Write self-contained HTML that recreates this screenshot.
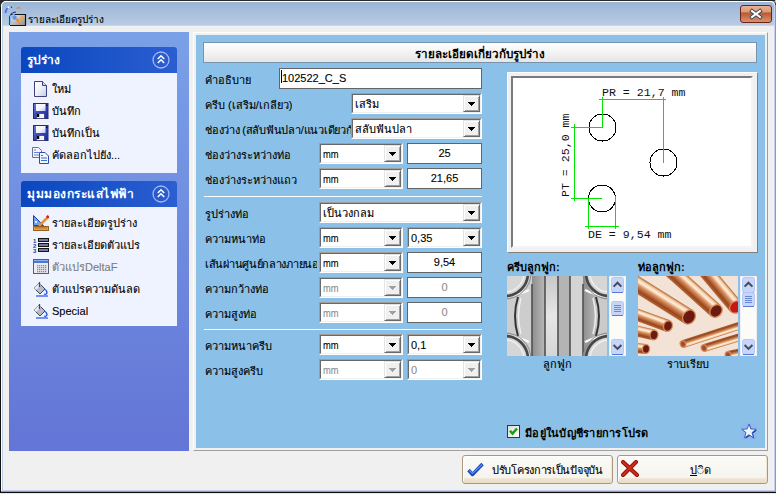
<!DOCTYPE html>
<html><head><meta charset="utf-8">
<style>
*{margin:0;padding:0;box-sizing:border-box}
html,body{width:776px;height:494px;overflow:hidden;background:#f0f0f0}
body{position:relative;font-family:"Liberation Sans",sans-serif;font-size:11px;color:#000;-webkit-text-stroke:0.1px currentColor}
.gh,#head,.bd{-webkit-text-stroke:0}
.a{position:absolute}
/* window frame */
#frame{left:0;top:0;width:776px;height:494px;background:#f0f0f0}
#title{left:2px;top:2px;width:772px;height:24px;background:linear-gradient(#9bb5d5,#b9cde5)}
.ttl{left:28px;top:13px;font-size:10px;line-height:13px;color:#000}
#close{left:740px;top:5px;width:32px;height:18px;border:1px solid #6b2418;border-radius:3px;
 background:linear-gradient(#eab090 0%,#dc9a78 35%,#b85a34 45%,#c46a44 60%,#dc9068 100%)}
/* left panel */
#lp{left:9px;top:32px;width:180px;height:419px;background:linear-gradient(#7aa1e8,#6375d6)}
.gh{left:21px;width:156px;height:26px;border-radius:3px 3px 0 0;background:linear-gradient(90deg,#0a47bf,#2b5ed1);color:#fff;font-weight:bold;font-size:12px}
.gh span{position:absolute;left:6px;top:6px;line-height:14px}
.gb{left:21px;width:156px;background:#eff3ff}
.item{position:absolute;left:31px;height:22px;line-height:22px;font-size:11px}
.item .ic{position:absolute;left:2px;top:3px;width:16px;height:16px}
.item .tx{position:absolute;left:21px;top:0;white-space:nowrap}
.chev{position:absolute;left:132px;top:4px;width:18px;height:18px;border-radius:50%;border:1px solid #9aaef0;background:#2458cc}
/* main panel */
#mpo{left:193px;top:32px;width:575px;height:419px;border:1px solid;border-color:#fff #a0a0a0 #a0a0a0 #fff}
#mp{left:196px;top:35px;width:569px;height:413px;background:#8bc0e8}
#head{left:203px;top:42px;width:554px;height:21px;border:1px solid #7a93ad;background:linear-gradient(#ffffff,#e6e6e6);text-align:center;font-weight:bold;font-size:11.6px;line-height:21px}
.lbl{position:absolute;left:205px;white-space:nowrap;overflow:hidden;height:22px;line-height:25px;font-size:11px}
.txt{position:absolute;height:21px;background:#fff;border:1px solid #646464;font-size:11px;line-height:18px;padding:0 2px;white-space:nowrap;overflow:hidden}
.cmb{position:absolute;height:21px;background:#fff;border:1px solid;border-color:#a39d98 #fff #fff #a39d98;font-size:11px;white-space:nowrap}
.cmb .in{position:absolute;left:0;top:0;right:0;bottom:0;border:1px solid;border-color:#696969 #f0f0f0 #f0f0f0 #696969;overflow:hidden;line-height:18px;padding-left:2px}
.btn{position:absolute;right:0;top:0;width:17px;height:17px;background:#f0f0f0;border:1px solid;border-color:#e3e3e3 #696969 #696969 #e3e3e3;box-shadow:inset 1px 1px 0 #fff,inset -1px -1px 0 #a0a0a0}
.btn:after{content:"";position:absolute;left:4px;top:6px;width:7px;height:4px;
 background:linear-gradient(#000,#000) 0 0/7px 1px no-repeat,linear-gradient(#000,#000) 1px 1px/5px 1px no-repeat,linear-gradient(#000,#000) 2px 2px/3px 1px no-repeat,linear-gradient(#000,#000) 3px 3px/1px 1px no-repeat}
.dis{color:#8c8c8c}
.dis .btn:after{background:linear-gradient(#a0a0a0,#a0a0a0) 0 0/7px 1px no-repeat,linear-gradient(#a0a0a0,#a0a0a0) 1px 1px/5px 1px no-repeat,linear-gradient(#a0a0a0,#a0a0a0) 2px 2px/3px 1px no-repeat,linear-gradient(#a0a0a0,#a0a0a0) 3px 3px/1px 1px no-repeat}
.c{text-align:center}
.mm{display:inline-block;transform:scaleX(.85);transform-origin:0 0}
.sep{position:absolute;left:204px;width:278px;height:1px;background:#fff}
</style></head><body>
<div id="frame" class="a"></div>
<!-- borders -->
<div class="a" style="left:0;top:0;width:776px;height:1px;background:#2a2a2a"></div>
<div class="a" style="left:0;top:0;width:1px;height:494px;background:#111"></div>
<div class="a" style="left:1px;top:1px;width:774px;height:1px;background:#fff"></div>
<div class="a" style="left:1px;top:1px;width:1px;height:490px;background:#fff"></div>
<div class="a" style="left:2px;top:2px;width:1px;height:488px;background:#b9cde6"></div>
<div id="title" class="a"></div>
<svg class="a" style="left:0;top:0" width="8" height="8" viewBox="0 0 8 8"><path d="M0 0 H7 V0.8 Q1.2 0.8 0.8 7 H0 Z" fill="#2a2a2a"/><path d="M7 1.3 Q1.6 1.3 1.3 7" stroke="#fff" stroke-width="0.9" fill="none"/></svg>
<div class="a" style="left:2px;top:25px;width:772px;height:1px;background:#c6d8ec"></div>
<div class="a" style="left:774px;top:2px;width:1px;height:489px;background:#c8d0f0"></div>
<div class="a" style="left:775px;top:4px;width:1px;height:490px;background:#22c4ee"></div>
<svg class="a" style="left:766px;top:0" width="10" height="8" viewBox="0 0 10 8"><rect x="9" y="0" width="1" height="4" fill="#8ae0f8"/><path d="M0 0.5 H5 Q9.5 0.5 9.5 5" stroke="#222" stroke-width="1" fill="none"/><path d="M0 1.5 H5 Q8.5 1.5 8.5 5" stroke="#fff" stroke-width="1" fill="none"/></svg>
<div class="a" style="left:2px;top:490px;width:773px;height:1px;background:#c8d0f0"></div>
<div class="a" style="left:1px;top:491px;width:775px;height:1px;background:#22c4ee"></div>
<div class="a" style="left:0;top:492px;width:776px;height:1px;background:#101010"></div>
<div class="a" style="left:0;top:493px;width:776px;height:1px;background:#e8e8e8"></div>

<svg class="a" style="left:2px;top:2px" width="26" height="26" viewBox="0 0 26 26">
<defs><linearGradient id="tbx" x1="0" y1="0" x2="1" y2="1"><stop offset="0" stop-color="#f0f0f0"/><stop offset="0.6" stop-color="#b8b8b8"/><stop offset="1" stop-color="#909090"/></linearGradient></defs>
<path d="M3.5 11 Q4 6.5 7.5 4.8" stroke="#3a78f0" stroke-width="1.8" fill="none"/>
<circle cx="6.5" cy="5.3" r="1.1" fill="#fff"/>
<circle cx="9.5" cy="5.2" r="0.7" fill="#203060"/>
<path d="M14 6.5 Q16.5 3.5 19 6.5 Z" fill="#f07a28"/>
<rect x="7" y="12" width="16.5" height="11" fill="url(#tbx)"/>
<path d="M9 12.5 H23.5 V23.5 H8" stroke="#141414" stroke-width="1.2" fill="none"/>
<path d="M7.5 23 V15 Q8.5 10.5 14 10" stroke="#2a3a80" stroke-width="1.1" fill="none"/>
<path d="M8.5 21 V16 Q9.5 12.5 13 12" stroke="#70b8f8" stroke-width="1.2" fill="none"/>
<circle cx="12.5" cy="15.5" r="2.2" fill="#4a90f0" opacity="0.9"/>
<path d="M14.5 17 L17 20 L21.5 14.5" stroke="#f08a30" stroke-width="2.2" fill="none"/>
<path d="M17 20 L21.5 14.5" stroke="#fcd080" stroke-width="0.8" fill="none"/>
</svg>
<div class="a ttl">รายละเอียดรูปร่าง</div>
<div id="close" class="a"></div>
<svg class="a" style="left:740px;top:5px" width="32" height="18" viewBox="0 0 32 18">
<path d="M12 6 L20 12 M20 6 L12 12" stroke="#3b4656" stroke-width="3.8" stroke-linecap="square"/>
<path d="M12 6 L20 12 M20 6 L12 12" stroke="#fff" stroke-width="2" stroke-linecap="square"/>
</svg>

<!-- left panel -->
<div id="lp" class="a"></div>
<div class="a gh" style="top:47px"><span>รูปร่าง</span><svg style="position:absolute;left:130px;top:3px" width="20" height="20" viewBox="0 0 20 20"><circle cx="10" cy="10" r="8" fill="none" stroke="#a6b6f2" stroke-width="1.3"/><path d="M6.8 9 L10 5.8 L13.2 9 M6.8 13 L10 9.8 L13.2 13" stroke="#fff" stroke-width="1.6" fill="none"/></svg></div>
<div class="a gb" style="top:73px;height:100px">
  <div class="item" style="left:10px;top:5px"><div class="ic"><svg width="16" height="16" viewBox="0 0 16 16"><defs><linearGradient id="gd" x1="0" y1="0" x2="1" y2="1"><stop offset="0" stop-color="#fff"/><stop offset="0.5" stop-color="#f0f0f4"/><stop offset="1" stop-color="#b8d0ea"/></linearGradient></defs><path d="M1.5 0.5 H9.5 L13.5 4.5 V15.5 H1.5 Z" fill="url(#gd)" stroke="#3c4282"/><path d="M9.5 0.5 V4.5 H13.5" fill="#c8d8f0" stroke="#3c4282"/></svg></div><div class="tx">ใหม่</div></div>
  <div class="item" style="left:10px;top:27px"><div class="ic"><svg width="16" height="16" viewBox="0 0 16 16"><defs><linearGradient id="flb" x1="0" y1="0" x2="1" y2="1"><stop offset="0" stop-color="#6a80e0"/><stop offset="0.5" stop-color="#3848b8"/><stop offset="1" stop-color="#202a90"/></linearGradient><linearGradient id="fll" x1="0" y1="0" x2="1" y2="1"><stop offset="0" stop-color="#fff"/><stop offset="0.6" stop-color="#f0f0f8"/><stop offset="1" stop-color="#b0c4f0"/></linearGradient></defs><rect x="0.5" y="0.5" width="14.5" height="15" fill="url(#flb)" stroke="#262c7c"/><rect x="3" y="1" width="9.5" height="7" fill="url(#fll)"/><rect x="3.5" y="10.5" width="8" height="5" fill="#f4f4f8" stroke="#1c2060" stroke-width="0.6"/><rect x="4" y="11" width="2.2" height="3" fill="#000"/><rect x="13" y="1.5" width="1.3" height="1.5" fill="#000"/></svg></div><div class="tx">บันทึก</div></div>
  <div class="item" style="left:10px;top:49px"><div class="ic"><svg width="16" height="16" viewBox="0 0 16 16"><defs><linearGradient id="flb" x1="0" y1="0" x2="1" y2="1"><stop offset="0" stop-color="#6a80e0"/><stop offset="0.5" stop-color="#3848b8"/><stop offset="1" stop-color="#202a90"/></linearGradient><linearGradient id="fll" x1="0" y1="0" x2="1" y2="1"><stop offset="0" stop-color="#fff"/><stop offset="0.6" stop-color="#f0f0f8"/><stop offset="1" stop-color="#b0c4f0"/></linearGradient></defs><rect x="0.5" y="0.5" width="14.5" height="15" fill="url(#flb)" stroke="#262c7c"/><rect x="3" y="1" width="9.5" height="7" fill="url(#fll)"/><rect x="3.5" y="10.5" width="8" height="5" fill="#f4f4f8" stroke="#1c2060" stroke-width="0.6"/><rect x="4" y="11" width="2.2" height="3" fill="#000"/><rect x="13" y="1.5" width="1.3" height="1.5" fill="#000"/></svg></div><div class="tx">บันทึกเป็น</div></div>
  <div class="item" style="left:10px;top:71px"><div class="ic"><svg width="18" height="18" viewBox="0 0 18 18" style="position:absolute;left:-1px;top:0"><path d="M0.5 0.5 H6.5 L9.5 3.5 V10.5 H0.5 Z" fill="#f4f4f8" stroke="#70708a"/><path d="M2 3 H4 M2 5.5 H7 M2 8 H7" stroke="#5a86d8" stroke-width="1"/><path d="M7.5 5.5 H13 L16.5 9 V16.5 H7.5 Z" fill="#f4f6fc" stroke="#3848a8"/><path d="M9 8.5 H11 M9 11 H15 M9 13.5 H15" stroke="#3a70d0" stroke-width="1.2"/></svg></div><div class="tx">คัดลอกไปยัง...</div></div>
</div>
<div class="a gh" style="top:181px"><span style="letter-spacing:0.5px">มุมมองกระแสไฟฟ้า</span><svg style="position:absolute;left:130px;top:3px" width="20" height="20" viewBox="0 0 20 20"><circle cx="10" cy="10" r="8" fill="none" stroke="#a6b6f2" stroke-width="1.3"/><path d="M6.8 9 L10 5.8 L13.2 9 M6.8 13 L10 9.8 L13.2 13" stroke="#fff" stroke-width="1.6" fill="none"/></svg></div>
<div class="a gb" style="top:207px;height:119px">
  <div class="item" style="left:10px;top:5px"><div class="ic"><svg width="16" height="16" viewBox="0 0 16 16"><path d="M0.5 0.5 L10.5 10.5 H0.5 Z" fill="#6aa0f0" stroke="#2040b0"/><circle cx="3" cy="7" r="1" fill="#fff"/><path d="M6 11 L15 2" stroke="#e8903a" stroke-width="2.6"/><path d="M13.8 0.8 L15.6 2.6" stroke="#d02818" stroke-width="2.4"/><rect x="0.5" y="11.5" width="15" height="4" fill="#e0a050" stroke="#9a6020"/><path d="M3 12 V13.5 M5 12 V13.5 M7 12 V13.5 M9 12 V13.5 M11 12 V13.5 M13 12 V13.5" stroke="#7a4a10" stroke-width="0.7"/></svg></div><div class="tx">รายละเอียดรูปร่าง</div></div>
  <div class="item" style="left:10px;top:27px"><div class="ic"><svg width="16" height="16" viewBox="0 0 16 16"><text x="0" y="5.5" font-size="6" font-weight="bold" fill="#1c3a90" font-family="Liberation Sans">1</text><text x="0" y="10.5" font-size="6" font-weight="bold" fill="#1c3a90" font-family="Liberation Sans">2</text><text x="0" y="15.5" font-size="6" font-weight="bold" fill="#1c3a90" font-family="Liberation Sans">3</text><rect x="5.5" y="1.5" width="10" height="3" fill="#7878a0" stroke="#141414"/><rect x="5.5" y="6.5" width="10" height="3" fill="#7878a0" stroke="#141414"/><rect x="5.5" y="11.5" width="10" height="3" fill="#7878a0" stroke="#141414"/></svg></div><div class="tx">รายละเอียดตัวแปร</div></div>
  <div class="item" style="left:10px;top:49px;color:#7c7c7c"><div class="ic"><svg width="16" height="16" viewBox="0 0 16 16"><rect x="0.5" y="0.5" width="15" height="14" fill="#ececf0" stroke="#5a5a70"/><rect x="1" y="1" width="14" height="3" fill="#4a7ad8"/><rect x="1" y="1" width="14" height="1" fill="#8ab0f0"/><rect x="4" y="6" width="1.3" height="1.3" fill="#8a8a96"/><rect x="6" y="6" width="1.3" height="1.3" fill="#8a8a96"/><rect x="8" y="6" width="1.3" height="1.3" fill="#8a8a96"/><rect x="10" y="6" width="1.3" height="1.3" fill="#8a8a96"/><rect x="12" y="6" width="1.3" height="1.3" fill="#8a8a96"/><rect x="4" y="8" width="1.3" height="1.3" fill="#8a8a96"/><rect x="6" y="8" width="1.3" height="1.3" fill="#8a8a96"/><rect x="8" y="8" width="1.3" height="1.3" fill="#8a8a96"/><rect x="10" y="8" width="1.3" height="1.3" fill="#8a8a96"/><rect x="12" y="8" width="1.3" height="1.3" fill="#8a8a96"/><rect x="4" y="10" width="1.3" height="1.3" fill="#8a8a96"/><rect x="6" y="10" width="1.3" height="1.3" fill="#8a8a96"/><rect x="8" y="10" width="1.3" height="1.3" fill="#8a8a96"/><rect x="10" y="10" width="1.3" height="1.3" fill="#8a8a96"/><rect x="12" y="10" width="1.3" height="1.3" fill="#8a8a96"/><rect x="4" y="12" width="1.3" height="1.3" fill="#8a8a96"/><rect x="6" y="12" width="1.3" height="1.3" fill="#8a8a96"/><rect x="8" y="12" width="1.3" height="1.3" fill="#8a8a96"/><rect x="10" y="12" width="1.3" height="1.3" fill="#8a8a96"/><rect x="12" y="12" width="1.3" height="1.3" fill="#8a8a96"/></svg></div><div class="tx">ตัวแปรDeltaF</div></div>
  <div class="item" style="left:10px;top:71px"><div class="ic"><svg width="16" height="16" viewBox="0 0 16 16"><path d="M1 7 L6 2 L12 8 L7 13 Z" fill="#b8bcc8" stroke="#404858"/><path d="M1 7 L6 2 L8 4 L3 9 Z" fill="#e8ecf4"/><path d="M6.5 1 V6" stroke="#404858" stroke-width="1.3"/><path d="M11 8 Q14 9 14 12 Q13 14 11 13" stroke="#2050e0" stroke-width="1.3" fill="none"/><path d="M3 15 H15" stroke="#2050e0" stroke-width="1.2"/></svg></div><div class="tx">ตัวแปรความดันลด</div></div>
  <div class="item" style="left:10px;top:93px"><div class="ic"><svg width="16" height="16" viewBox="0 0 16 16"><path d="M1 7 L6 2 L12 8 L7 13 Z" fill="#b8bcc8" stroke="#404858"/><path d="M1 7 L6 2 L8 4 L3 9 Z" fill="#e8ecf4"/><path d="M6.5 1 V6" stroke="#404858" stroke-width="1.3"/><path d="M11 8 Q14 9 14 12 Q13 14 11 13" stroke="#2050e0" stroke-width="1.3" fill="none"/><path d="M3 15 H15" stroke="#2050e0" stroke-width="1.2"/></svg></div><div class="tx">Special</div></div>
</div>

<!-- main panel -->
<div id="mpo" class="a"></div>
<div id="mp" class="a"></div>
<div id="head" class="a">รายละเอียดเกี่ยวกับรูปร่าง</div>

<div class="lbl" style="top:68px">คำอธิบาย</div>
<div class="txt" style="left:279px;top:68px;width:203px">102522_C_S</div>
<div class="a" style="left:281px;top:70px;width:1px;height:13px;background:#000"></div>

<div class="lbl" style="top:93px">ครีบ (เสริม/เกลียว)</div>
<div class="cmb" style="left:351px;top:93px;width:131px"><div class="in">เสริม<div class="btn"></div></div></div>
<div class="lbl" style="top:118px;width:146px;letter-spacing:-0.25px">ช่องว่าง (สลับฟันปลา/แนวเดียวกัน)</div>
<div class="cmb" style="left:351px;top:118px;width:131px"><div class="in">สลับฟันปลา<div class="btn"></div></div></div>

<div class="lbl" style="top:143px">ช่องว่างระหว่างท่อ</div>
<div class="cmb" style="left:319px;top:143px;width:84px"><div class="in"><span class="mm">mm</span><div class="btn"></div></div></div>
<div class="txt c" style="left:407px;top:143px;width:75px">25</div>
<div class="lbl" style="top:168px">ช่องว่างระหว่างแถว</div>
<div class="cmb" style="left:319px;top:168px;width:84px"><div class="in"><span class="mm">mm</span><div class="btn"></div></div></div>
<div class="txt c" style="left:407px;top:168px;width:75px">21,65</div>

<div class="sep" style="top:196px"></div>

<div class="lbl" style="top:202px">รูปร่างท่อ</div>
<div class="cmb" style="left:319px;top:202px;width:163px"><div class="in">เป็นวงกลม<div class="btn"></div></div></div>
<div class="lbl" style="top:227px">ความหนาท่อ</div>
<div class="cmb" style="left:319px;top:227px;width:84px"><div class="in"><span class="mm">mm</span><div class="btn"></div></div></div>
<div class="cmb" style="left:407px;top:227px;width:75px"><div class="in">0,35<div class="btn"></div></div></div>
<div class="lbl" style="top:252px;width:112px;letter-spacing:-0.3px">เส้นผ่านศูนย์กลางภายนอก</div>
<div class="cmb" style="left:319px;top:252px;width:84px"><div class="in"><span class="mm">mm</span><div class="btn"></div></div></div>
<div class="txt c" style="left:407px;top:252px;width:75px">9,54</div>
<div class="lbl" style="top:277px">ความกว้างท่อ</div>
<div class="cmb dis" style="left:319px;top:277px;width:84px"><div class="in"><span class="mm">mm</span><div class="btn"></div></div></div>
<div class="txt c dis" style="left:407px;top:277px;width:75px">0</div>
<div class="lbl" style="top:302px">ความสูงท่อ</div>
<div class="cmb dis" style="left:319px;top:302px;width:84px"><div class="in"><span class="mm">mm</span><div class="btn"></div></div></div>
<div class="txt c dis" style="left:407px;top:302px;width:75px">0</div>

<div class="sep" style="top:329px"></div>

<div class="lbl" style="top:334px">ความหนาครีบ</div>
<div class="cmb" style="left:319px;top:334px;width:84px"><div class="in"><span class="mm">mm</span><div class="btn"></div></div></div>
<div class="cmb" style="left:407px;top:334px;width:75px"><div class="in">0,1<div class="btn"></div></div></div>
<div class="lbl" style="top:359px">ความสูงครีบ</div>
<div class="cmb dis" style="left:319px;top:359px;width:84px"><div class="in"><span class="mm">mm</span><div class="btn"></div></div></div>
<div class="cmb dis" style="left:407px;top:359px;width:75px"><div class="in">0<div class="btn"></div></div></div>

<!-- picture box -->
<div class="a" style="left:507px;top:72px;width:251px;height:181px;border:1px solid;border-color:#fff #808080 #808080 #fff;background:#f0f0f0"></div>
<div class="a" style="left:511px;top:76px;width:242px;height:172px;border:2px solid;border-color:#7a7a7a #f4f4f4 #f4f4f4 #7a7a7a;background:#fff"></div>
<svg class="a" style="left:507px;top:72px;-webkit-text-stroke:0" width="251" height="181" viewBox="507 72 251 181" font-family="Liberation Mono" font-size="11.6">
<g stroke="#000" stroke-width="1" fill="none" shape-rendering="crispEdges">
<circle cx="602.5" cy="127.5" r="13.5"/>
<circle cx="663.5" cy="162.5" r="13.5"/>
<circle cx="602" cy="198.5" r="13.5"/>
</g>
<g stroke="#00e600" stroke-width="1" fill="none" shape-rendering="crispEdges">
<path d="M599 99.5 H666"/>
<path d="M602.5 97 V128"/>
<path d="M663.5 97 V163"/>
<path d="M571 127.5 H603"/>
<path d="M574.5 124 V201"/>
<path d="M571 198.5 H602"/>
<path d="M588.5 198 V229 M615.5 196 V229"/>
<path d="M585 226.5 H619"/>
</g>
<g fill="#101010">
<text x="602" y="96">PR = 21,7 mm</text>
<text x="588" y="238">DE = 9,54 mm</text>
<text x="0" y="0" transform="translate(569 197) rotate(-90)">PT = 25,0 mm</text>
</g>
</svg>

<!-- images -->
<div class="a" style="left:507px;top:260px;font-weight:bold;line-height:14px;-webkit-text-stroke:0">ครีบลูกฟูก:</div>
<svg class="a" style="left:507px;top:276px" width="100" height="80" viewBox="0 0 100 80">
<defs>
<linearGradient id="s1" x1="0" x2="1"><stop offset="0" stop-color="#8e8e8e"/><stop offset="1" stop-color="#b8b8b8"/></linearGradient>
<linearGradient id="s2" x1="0" x2="0" y2="1"><stop offset="0" stop-color="#c8c8c8"/><stop offset="0.5" stop-color="#e6e6e6"/><stop offset="1" stop-color="#d6d6d6"/></linearGradient>
</defs>
<rect width="100" height="80" fill="#c6c6c6"/>
<rect x="0" y="0" width="25" height="80" fill="#cdcdcd"/>
<rect x="25" y="0" width="13" height="80" fill="url(#s1)"/>
<rect x="38" y="0" width="13" height="80" fill="url(#s2)"/>
<rect x="51" y="0" width="12" height="80" fill="#b4b4b4"/>
<rect x="63" y="0" width="13" height="80" fill="#d4d4d4"/>
<rect x="76" y="0" width="13" height="80" fill="url(#s1)"/>
<rect x="89" y="0" width="11" height="80" fill="#cacaca"/>
<g stroke="#505050" stroke-width="1.6">
<path d="M25 8 V80 M38 0 V80 M51 0 V80 M63 0 V80 M76 8 V80"/>
</g>
<path d="M11 21 Q5 40 11 60" stroke="#333" stroke-width="2" fill="none"/>
<path d="M89 21 Q95 40 89 60" stroke="#333" stroke-width="2" fill="none"/>
<path d="M14 22 Q9 40 14 58" stroke="#eee" stroke-width="1.5" fill="none"/>
<path d="M86 22 Q91 40 86 58" stroke="#eee" stroke-width="1.5" fill="none"/>
<path d="M2 20 Q12 19 22 14" stroke="#f8f8f8" stroke-width="2.2" fill="none"/>
<path d="M98 20 Q88 19 78 14" stroke="#f8f8f8" stroke-width="2.2" fill="none"/>
<path d="M2 60 Q12 61 22 66" stroke="#f8f8f8" stroke-width="2.2" fill="none"/>
<path d="M98 60 Q88 61 78 66" stroke="#f8f8f8" stroke-width="2.2" fill="none"/>
<g fill="#d6d6d6" stroke="#474747" stroke-width="2.6">
<circle cx="-2" cy="-3" r="23"/>
<circle cx="102" cy="-3" r="23"/>
<circle cx="-2" cy="83" r="23"/>
<circle cx="102" cy="83" r="23"/>
</g>
<g fill="none" stroke="#f4f4f4" stroke-width="1.2">
<circle cx="-2" cy="-3" r="19"/>
<circle cx="102" cy="-3" r="19"/>
<circle cx="-2" cy="83" r="19"/>
<circle cx="102" cy="83" r="19"/>
</g>
<g fill="none" stroke="#8a8a8a" stroke-width="1">
<circle cx="-2" cy="-3" r="26"/>
<circle cx="102" cy="-3" r="26"/>
<circle cx="-2" cy="83" r="26"/>
<circle cx="102" cy="83" r="26"/>
</g>
</svg>
<div class="a" style="left:609px;top:276px;width:17px;height:80px;background:#fbfbf8;border:1px solid #eeeef4"></div>
<svg class="a" style="left:609px;top:276px" width="17" height="80" viewBox="0 0 17 80">
<rect x="2.5" y="1.5" width="12" height="15" rx="2" fill="#c6d6fa" stroke="#b4c8f4"/><path d="M3 16.5 H14" stroke="#5a78d8"/>
<path d="M4.6 10.6 L8.5 6.7 L12.4 10.6" stroke="#454a58" stroke-width="2" fill="none"/>
<rect x="2.5" y="25.5" width="12" height="14" rx="2" fill="#c6d6fa" stroke="#b4c8f4"/><path d="M3 39.5 H14" stroke="#5a78d8"/>
<path d="M5 29.5 H12 M5 31.5 H12 M5 33.5 H12 M5 35.5 H12" stroke="#6a88d8"/>
<rect x="2.5" y="63.5" width="12" height="15" rx="2" fill="#c6d6fa" stroke="#b4c8f4"/><path d="M3 78.5 H14" stroke="#5a78d8"/>
<path d="M4.6 69 L8.5 72.9 L12.4 69" stroke="#454a58" stroke-width="2" fill="none"/>
</svg>
<div class="a" style="left:507px;top:357px;width:100px;text-align:center;line-height:14px">ลูกฟูก</div>

<div class="a" style="left:638px;top:260px;font-weight:bold;line-height:14px;-webkit-text-stroke:0">ท่อลูกฟูก:</div>
<svg class="a" style="left:638px;top:276px" width="100" height="80" viewBox="0 0 100 80">
<defs>
<linearGradient id="tg" x1="0" y1="0" x2="0" y2="1"><stop offset="0" stop-color="#b06030"/><stop offset="0.15" stop-color="#f4d0a8"/><stop offset="0.3" stop-color="#fff0dc"/><stop offset="0.5" stop-color="#dc9060"/><stop offset="0.8" stop-color="#96461c"/><stop offset="1" stop-color="#b86838"/></linearGradient>
</defs>
<rect width="100" height="80" fill="#f3e2d6"/>
<g transform="translate(51 41) rotate(32)"><rect x="-130" y="-8.0" width="130" height="16" fill="url(#tg)"/><ellipse cx="0" cy="0" rx="6.7" ry="8.0" fill="#d88a5a"/><ellipse cx="0" cy="0" rx="5.4" ry="6.7" fill="#6a1a10"/></g><g transform="translate(78 35) rotate(42)"><rect x="-130" y="-7.5" width="130" height="15" fill="url(#tg)"/><ellipse cx="0" cy="0" rx="6.3" ry="7.5" fill="#d88a5a"/><ellipse cx="0" cy="0" rx="5.0" ry="6.2" fill="#6a1a10"/></g><g transform="translate(98 31) rotate(50)"><rect x="-130" y="-7.5" width="130" height="15" fill="url(#tg)"/><ellipse cx="0" cy="0" rx="6.3" ry="7.5" fill="#d88a5a"/><ellipse cx="0" cy="0" rx="5.0" ry="6.2" fill="#c81810"/></g><g transform="translate(30 50) rotate(20)"><rect x="-130" y="-6.0" width="130" height="12" fill="url(#tg)"/><ellipse cx="0" cy="0" rx="5.0" ry="6.0" fill="#d88a5a"/><ellipse cx="0" cy="0" rx="3.7" ry="4.7" fill="#6a1a10"/></g><g transform="translate(16 59) rotate(13)"><rect x="-130" y="-5.5" width="130" height="11" fill="url(#tg)"/><ellipse cx="0" cy="0" rx="4.6" ry="5.5" fill="#d88a5a"/><ellipse cx="0" cy="0" rx="3.3" ry="4.2" fill="#6a1a10"/></g><g transform="translate(8 73) rotate(5)"><rect x="-130" y="-5.0" width="130" height="10" fill="url(#tg)"/><ellipse cx="0" cy="0" rx="4.2" ry="5.0" fill="#d88a5a"/><ellipse cx="0" cy="0" rx="2.9" ry="3.7" fill="#6a1a10"/></g><g transform="translate(45 68) rotate(162)"><rect x="-130" y="-4.0" width="130" height="8" fill="url(#tg)"/><ellipse cx="0" cy="0" rx="3.4" ry="4.0" fill="#d88a5a"/><ellipse cx="0" cy="0" rx="2.1" ry="2.7" fill="#a05030"/></g><g transform="translate(66 72) rotate(163)"><rect x="-130" y="-4.0" width="130" height="8" fill="url(#tg)"/><ellipse cx="0" cy="0" rx="3.4" ry="4.0" fill="#d88a5a"/><ellipse cx="0" cy="0" rx="2.1" ry="2.7" fill="#a05030"/></g><g transform="translate(90 79) rotate(168)"><rect x="-130" y="-4.0" width="130" height="8" fill="url(#tg)"/><ellipse cx="0" cy="0" rx="3.4" ry="4.0" fill="#d88a5a"/><ellipse cx="0" cy="0" rx="2.1" ry="2.7" fill="#a05030"/></g>
</svg>
<div class="a" style="left:740px;top:276px;width:17px;height:80px;background:#fbfbf8;border:1px solid #eeeef4"></div>
<svg class="a" style="left:740px;top:276px" width="17" height="80" viewBox="0 0 17 80">
<rect x="2.5" y="1.5" width="12" height="15" rx="2" fill="#c6d6fa" stroke="#b4c8f4"/><path d="M3 16.5 H14" stroke="#5a78d8"/>
<path d="M4.6 10.6 L8.5 6.7 L12.4 10.6" stroke="#454a58" stroke-width="2" fill="none"/>
<rect x="2.5" y="16.5" width="12" height="14" rx="2" fill="#c6d6fa" stroke="#b4c8f4"/><path d="M3 30.5 H14" stroke="#5a78d8"/>
<path d="M5 20.5 H12 M5 22.5 H12 M5 24.5 H12 M5 26.5 H12" stroke="#6a88d8"/>
<rect x="2.5" y="63.5" width="12" height="15" rx="2" fill="#c6d6fa" stroke="#b4c8f4"/><path d="M3 78.5 H14" stroke="#5a78d8"/>
<path d="M4.6 69 L8.5 72.9 L12.4 69" stroke="#454a58" stroke-width="2" fill="none"/>
</svg>
<div class="a" style="left:638px;top:357px;width:100px;text-align:center;line-height:14px">ราบเรียบ</div>

<!-- checkbox -->
<div class="a" style="left:507px;top:425px;width:13px;height:13px;border:1px solid #2b2d84;background:linear-gradient(135deg,#dcdcd6,#fff)"></div>
<svg class="a" style="left:507px;top:425px" width="13" height="13" viewBox="0 0 13 13"><path d="M3 5.8 L5.5 8.6 L10 3.5" stroke="#1a9a1a" stroke-width="2.4" fill="none"/></svg>
<div class="a" style="left:525px;top:426px;font-weight:bold;line-height:14px;-webkit-text-stroke:0;letter-spacing:0.25px">มีอยู่ในบัญชีรายการโปรด</div>

<!-- buttons -->
<div class="a" style="left:462px;top:455px;width:151px;height:29px;border:1px solid #a8987e;border-radius:3px;background:linear-gradient(#fbfaf6,#f6f4ee 80%,#eee4d0 84%,#e8dcc4);box-shadow:inset 1px 1px 0 #fff,inset -1px 0 0 #efe6d4"></div>
<svg class="a" style="left:467px;top:462px" width="17" height="15" viewBox="0 0 17 15"><path d="M1.5 8 L5.5 12.5 L15.5 2" stroke="#1848b8" stroke-width="3.4" fill="none" stroke-linejoin="round"/><path d="M2 8 L5.5 11.5 L15 2.5" stroke="#5a90f0" stroke-width="1.2" fill="none"/></svg>
<div class="a" style="left:492px;top:463px;line-height:14px;letter-spacing:-0.3px">ปรับโครงการเป็นปัจจุบัน</div>
<div class="a" style="left:617px;top:455px;width:151px;height:29px;border:1px solid #a8987e;border-radius:3px;background:linear-gradient(#fbfaf6,#f6f4ee 80%,#eee4d0 84%,#e8dcc4);box-shadow:inset 1px 1px 0 #fff,inset -1px 0 0 #efe6d4"></div>
<svg class="a" style="left:621px;top:460px" width="18" height="17" viewBox="0 0 18 17"><path d="M2 2 L16 15 M15 2 L2 15" stroke="#8a1008" stroke-width="4" stroke-linecap="round"/><path d="M2 2 L16 15 M15 2 L2 15" stroke="#d42a18" stroke-width="2.2" stroke-linecap="round"/></svg>
<div class="a" style="left:690px;top:463px;line-height:14px"><u>ป</u>&#9676;ิด</div>

<svg class="a" style="left:741px;top:423px" width="16" height="16" viewBox="0 0 16 16"><rect width="16" height="16" fill="#96b0f0" opacity="0.45"/><polygon points="8.90,1.90 10.78,6.91 16.13,7.15 11.94,10.49 13.37,15.65 8.90,12.70 4.43,15.65 5.86,10.49 1.67,7.15 7.02,6.91" fill="#303848"/><polygon points="8.00,1.00 9.88,6.01 15.23,6.25 11.04,9.59 12.47,14.75 8.00,11.80 3.53,14.75 4.96,9.59 0.77,6.25 6.12,6.01" fill="#eef4ff" stroke="#2a5ad8" stroke-width="0.9" stroke-linejoin="round"/></svg>
</body></html>
